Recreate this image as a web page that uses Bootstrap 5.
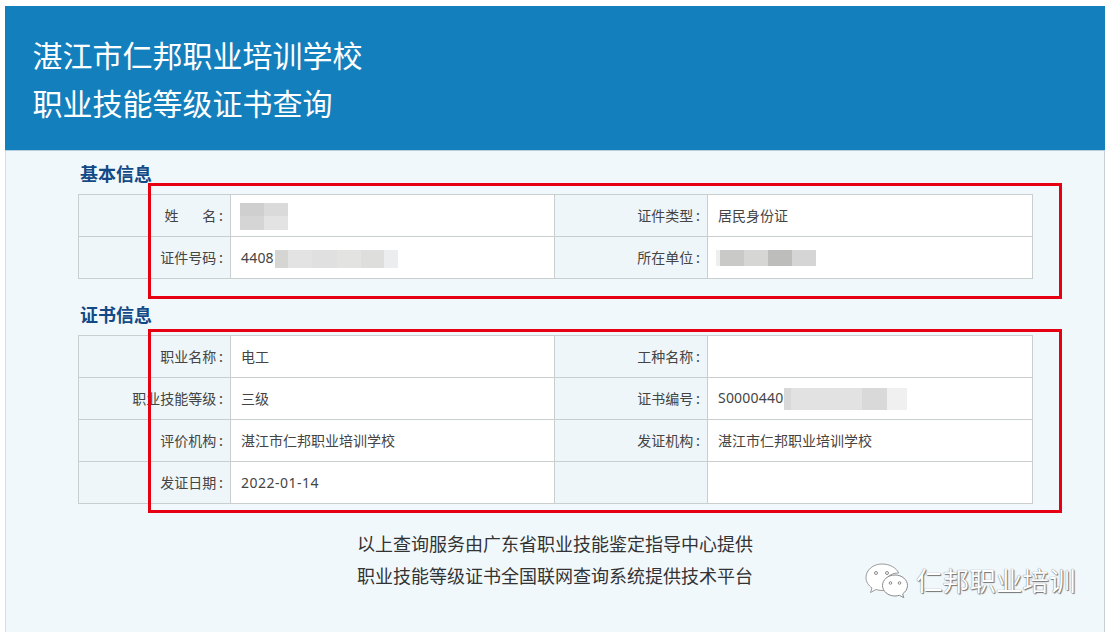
<!DOCTYPE html>
<html lang="zh-CN">
<head>
<meta charset="utf-8">
<title>职业技能等级证书查询</title>
<link href="https://cdn.jsdelivr.net/npm/bootstrap@5.3.0/dist/css/bootstrap.min.css" rel="stylesheet">
<style>
html,body{height:100%;overflow:hidden}
body{background:#fff;font-family:"Noto Sans CJK SC","Noto Sans",sans-serif;color:#444;position:relative}
.shell{margin:6px 8px 0 5px;height:626px;background:#f1f8fc;border-left:1px solid #d5dde2;border-right:1px solid #c8cfd4}
.banner{background:#1380bd;height:145px;margin:0 -1px;padding:24px 0 0 27.500px;color:#fff;font-size:30px;line-height:48px;border-bottom:1px solid #b5cfdf}
.sect{color:#134a86;font-size:18px;font-weight:700;line-height:24px;margin:0;padding-left:74px}
.sect-a{margin-top:10px;margin-bottom:9px}
.sect-b{margin-top:23px;margin-bottom:9px}
.info-t{width:955px;margin:0 0 0 72px;table-layout:fixed;border-collapse:collapse;background:#fff;font-size:14px;--bs-table-bg:transparent}
.info-t td,.info-t th{height:42px;padding:0;border:1px solid #c9cfcf;vertical-align:middle;font-weight:400;color:#444}
.info-t th{background:#eef6fa;text-align:right;padding-right:7px;white-space:nowrap}
.info-t td{padding-left:10px}
.c1{width:152px}.c2{width:324px}.c3{width:153px}
.latin{font-family:"Noto Sans",sans-serif;letter-spacing:.2px}
.datev{letter-spacing:.5px}
.mosaic{display:inline-flex;vertical-align:middle}
.mosaic i{display:block;height:100%}
.m-name{height:27px;width:48px;flex-wrap:wrap;margin:1px 0 0 -1px}
.m-name i{width:24px;height:50%}
.m-id{height:18px;margin-left:1px}
.m-unit{height:16px;margin:-2px 0 0 -2px}
.m-cert{height:22px;margin-left:1px}
.foot{text-align:center;font-size:18px;line-height:32px;color:#333;margin:23px 0 0}
.redbox{position:absolute;left:148px;width:914px;border:3px solid #e60012;pointer-events:none}
.rb1{top:183px;height:116px}
.rb2{top:329px;height:184px}
.mark-w{position:absolute;left:864px;top:562px;display:flex;align-items:center;gap:8px;color:#fff;font-size:26.6px;line-height:36px;text-shadow:0 0 1px #555,1px 1px 1px #777}
</style>
</head>
<body>
<div class="shell">
  <div class="banner">湛江市仁邦职业培训学校<br>职业技能等级证书查询</div>
  <h2 class="sect sect-a">基本信息</h2>
  <table class="info-t">
    <colgroup><col class="c1"><col class="c2"><col class="c3"><col></colgroup>
    <tr>
      <th>姓&emsp;&ensp;&thinsp;名&thinsp;:</th>
      <td><span class="mosaic m-name"><i style="background:#d0cfcf"></i><i style="background:#dadada"></i><i style="background:#d6d5d5"></i><i style="background:#e3e3e3"></i></span></td>
      <th>证件类型&thinsp;:</th><td>居民身份证</td>
    </tr>
    <tr>
      <th>证件号码&thinsp;:</th>
      <td><span class="latin">4408</span><span class="mosaic m-id"><i style="width:13px;background:#d5d6d3"></i><i style="width:24px;background:#e2e3e2"></i><i style="width:25px;background:#dfe0df"></i><i style="width:24px;background:#e3e3e2"></i><i style="width:23px;background:#dedfdd"></i><i style="width:14px;background:#ecedee"></i></span></td>
      <th>所在单位&thinsp;:</th>
      <td><span class="mosaic m-unit"><i style="width:4px;background:#eeeeee"></i><i style="width:24px;background:#c9c9c8"></i><i style="width:24px;background:#d6d6d5"></i><i style="width:24px;background:#bdbdbc"></i><i style="width:24px;background:#d5d5d5"></i></span></td>
    </tr>
  </table>
  <h2 class="sect sect-b">证书信息</h2>
  <table class="info-t">
    <colgroup><col class="c1"><col class="c2"><col class="c3"><col></colgroup>
    <tr><th>职业名称&thinsp;:</th><td>电工</td><th>工种名称&thinsp;:</th><td></td></tr>
    <tr>
      <th>职业技能等级&thinsp;:</th><td>三级</td>
      <th>证书编号&thinsp;:</th>
      <td><span class="latin">S0000440</span><span class="mosaic m-cert"><i style="width:7px;background:#d8d8d8"></i><i style="width:71px;background:#e2e2e2"></i><i style="width:25px;background:#d9d9d9"></i><i style="width:20px;background:#f0f0f0"></i></span></td>
    </tr>
    <tr><th>评价机构&thinsp;:</th><td>湛江市仁邦职业培训学校</td><th>发证机构&thinsp;:</th><td>湛江市仁邦职业培训学校</td></tr>
    <tr><th>发证日期&thinsp;:</th><td><span class="latin datev">2022-01-14</span></td><th></th><td></td></tr>
  </table>
  <p class="foot">以上查询服务由广东省职业技能鉴定指导中心提供<br>职业技能等级证书全国联网查询系统提供技术平台</p>
</div>
<div class="redbox rb1"></div>
<div class="redbox rb2"></div>
<div class="mark-w">
  <svg width="44" height="36" viewBox="0 0 44 36" aria-hidden="true">
    <path d="M18 2C9 2 2 8 2 15.500c0 4.500 2.500 8 6 10.500l-1.500 4.500 5.500-3c2 .6 4 1 6 1 1 0 2 0 3-.2-.6-1.500-1-3-1-4.500 0-7 6-12.800 14-12.800h.6C32.600 6 26 2 18 2z" fill="#fff" stroke="#9a9a9a" stroke-width="1"/>
    <path d="M31 13c-7 0-12.500 4.700-12.500 10.500S24 34 31 34c1.600 0 3-.3 4.400-.7l4.400 2.400-1.200-3.800c3-2 4.900-5 4.900-8.400C43.500 17.700 38 13 31 13z" fill="#fff" stroke="#8a8a8a" stroke-width="1"/>
    <circle cx="12" cy="11" r="1.500" fill="none" stroke="#8a8a8a"/><circle cx="23" cy="11" r="1.500" fill="none" stroke="#8a8a8a"/>
    <circle cx="26.500" cy="21" r="1.300" fill="none" stroke="#8a8a8a"/><circle cx="35.500" cy="21" r="1.300" fill="none" stroke="#8a8a8a"/>
  </svg>
  <span>仁邦职业培训</span>
</div>
<script src="https://cdn.jsdelivr.net/npm/bootstrap@5.3.0/dist/js/bootstrap.bundle.min.js"></script>
</body>
</html>
